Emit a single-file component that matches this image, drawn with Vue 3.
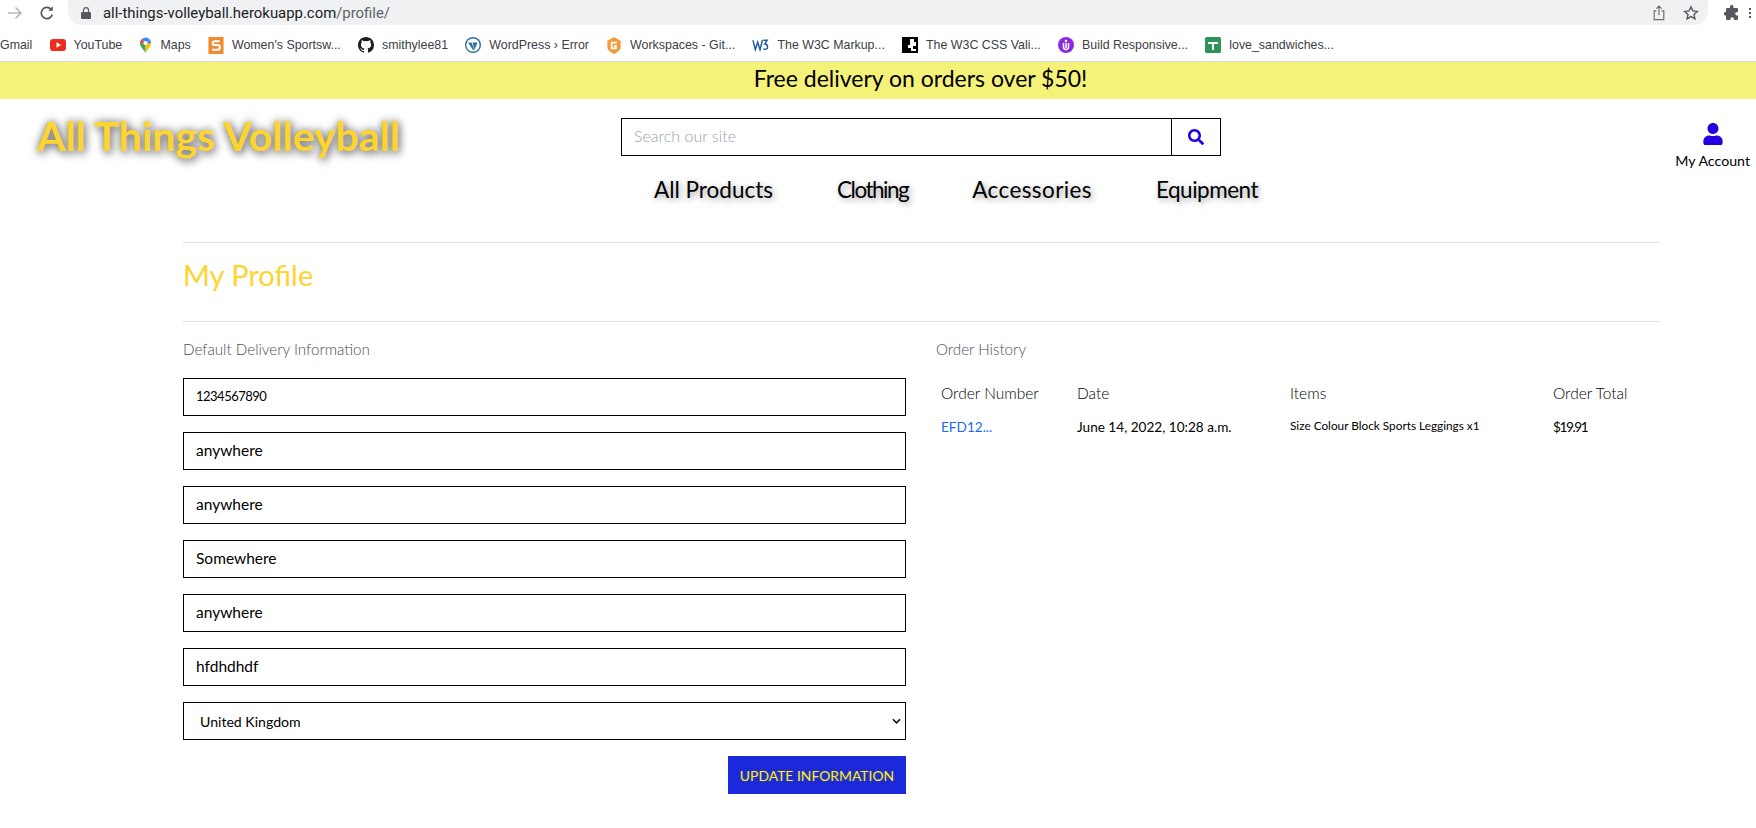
<template>
  <div class="page">
    <div class="toolbar">
      <svg class="nav-arrow" viewBox="0 0 16 16" width="16" height="16" fill="none" stroke="#b4b6b9" stroke-width="1.6">
        <path d="M1 8h13M8.500 2.500 14 8l-5.500 5.500" />
      </svg>
      <svg class="reload" viewBox="0 0 16 16" width="16" height="16" fill="none" stroke="#55585c" stroke-width="1.7">
        <path d="M13.300 9.500A5.600 5.600 0 1 1 12 4.200" />
        <path d="M13.800 1.200v4.600H9.200z" fill="#55585c" stroke="none" />
      </svg>
      <div class="url-pill">
        <svg class="lock" viewBox="0 0 10 12" width="10" height="12" fill="#55585c">
          <path d="M1 5h8a1 1 0 0 1 1 1v5a1 1 0 0 1-1 1H1a1 1 0 0 1-1-1V6a1 1 0 0 1 1-1z" />
          <path d="M2.500 5V3.200a2.500 2.500 0 0 1 5 0V5" fill="none" stroke="#55585c" stroke-width="1.200" />
        </svg>
        <span class="url">all-things-volleyball.herokuapp.com<span class="url-path">/profile/</span></span>
        <span class="pill-spacer"></span>
        <svg viewBox="0 0 16 18" width="14" height="16" fill="none" stroke="#6b6e72" stroke-width="1.300" class="share">
          <path d="M5 6.500H2.500v10h11v-10H11M8 11.500V1.500M5 4l3-3 3 3" />
        </svg>
        <svg viewBox="0 0 16 16" width="16" height="16" fill="none" stroke="#55585c" stroke-width="1.400" class="star">
          <path d="m8 1.800 1.900 4.100 4.400.5-3.300 3 .9 4.400L8 11.600l-3.900 2.200.9-4.400-3.300-3 4.400-.5z" />
        </svg>
      </div>
      <svg viewBox="0 0 16 16" width="16" height="16" fill="#55585c" class="puzzle">
        <path d="M6 1.500a1.800 1.800 0 0 1 3.500 0V3H13a1 1 0 0 1 1 1v3h-1a1.800 1.800 0 0 0 0 3.600h1V14a1 1 0 0 1-1 1h-3v-1a1.800 1.800 0 0 0-3.600 0v1H3a1 1 0 0 1-1-1v-3.500H1a1.800 1.800 0 0 1 0-3.500h1V4a1 1 0 0 1 1-1h3z" />
      </svg>
      <span class="dots"><i></i><i></i><i></i></span>
    </div>

    <div class="bookmarks">
      <span class="bm gmail">Gmail</span>
      <span class="bm">
        <svg viewBox="0 0 16 16" width="16" height="16"><rect y="2" width="16" height="12" rx="3" fill="#ee2c1f" /><path d="m6.500 5.200 4.500 2.800-4.500 2.800z" fill="#fff" /></svg>
        YouTube
      </span>
      <span class="bm">
        <svg viewBox="0 0 14 18" width="13" height="17">
          <path d="M7 17C5.500 13.500 1 10.500 1 6.300L7 7z" fill="#34a853" />
          <path d="M7 17c1.500-3.500 6-6.500 6-10.700L7 7z" fill="#fbbc04" />
          <path d="M1 6.300A6 6 0 0 1 3 2l4 5z" fill="#ea4335" />
          <path d="M3 2a6 6 0 0 1 8.500.3L7 7z" fill="#4285f4" />
          <path d="M11.500 2.300A6 6 0 0 1 13 6.300L7 7z" fill="#4285f4" />
          <circle cx="7" cy="6.300" r="2.200" fill="#fff" />
        </svg>
        Maps
      </span>
      <span class="bm">
        <svg viewBox="0 0 16 18" width="16" height="17"><rect width="16" height="18" fill="#ee8b2e" /><path d="M12 4.500H6.500a1.500 1.500 0 0 0 0 4h3a2 2 0 0 1 0 5H4" fill="none" stroke="#fff" stroke-width="2.200" /></svg>
        Women's Sportsw...
      </span>
      <span class="bm">
        <svg viewBox="0 0 16 16" width="16" height="16" fill="#1b1f23">
          <path d="M8 0C3.580 0 0 3.580 0 8c0 3.540 2.290 6.530 5.470 7.590.4.070.55-.17.55-.38v-1.340c-2.230.48-2.700-1.070-2.700-1.070-.36-.92-.89-1.170-.89-1.170-.73-.5.050-.49.050-.49.800.060 1.230.830 1.230.830.710 1.220 1.870.870 2.330.660.070-.520.280-.870.510-1.070-1.780-.200-3.640-.890-3.640-3.950 0-.870.310-1.590.820-2.150-.080-.200-.360-1.020.080-2.120 0 0 .670-.210 2.200.820a7.600 7.600 0 0 1 4 0c1.530-1.040 2.200-.820 2.200-.820.440 1.100.160 1.920.080 2.120.510.560.820 1.270.820 2.150 0 3.070-1.870 3.750-3.650 3.950.290.250.540.730.540 1.480v2.190c0 .210.150.460.550.380A8.010 8.010 0 0 0 16 8c0-4.420-3.580-8-8-8z" />
        </svg>
        smithylee81
      </span>
      <span class="bm">
        <svg viewBox="0 0 16 16" width="16" height="16"><circle cx="8" cy="8" r="8" fill="#2f6f9f" /><circle cx="8" cy="8" r="6.600" fill="#fff" /><path d="M3 5.500h3.500l2.700 7-1.200.6zM7.500 5.500h5l-3 7.400L8.500 9z" fill="#2f6f9f" /></svg>
        WordPress › Error
      </span>
      <span class="bm">
        <svg viewBox="0 0 16 18" width="16" height="17"><path d="M8 0 15 4v7c0 3-4 5-7 7-3-2-7-4-7-7V4z" fill="#f19a3e" /><path d="M11 6H5.500v6H10V9.500H8" fill="none" stroke="#fff" stroke-width="1.800" /></svg>
        Workspaces - Git...
      </span>
      <span class="bm">
        <svg viewBox="0 0 18 14" width="17" height="14" fill="none" stroke="#1d5a9e" stroke-width="1.500"><path d="M1 2l2.500 10L6 4l2.500 8L11 2" /><path d="M12 2h4l-2.500 4c2 0 3 1 3 3s-2.500 3.500-4.500 2" /></svg>
        The W3C Markup...
      </span>
      <span class="bm">
        <svg viewBox="0 0 16 16" width="16" height="16"><rect width="16" height="16" fill="#000" /><path d="M8 2h4v3h2v4h-3v3h3v2H9v-3H6V8h2z" fill="#fff" /></svg>
        The W3C CSS Vali...
      </span>
      <span class="bm">
        <svg viewBox="0 0 16 16" width="16" height="16"><circle cx="8" cy="8" r="8" fill="#8a2be2" /><path d="M5.500 6v4a2.500 2.500 0 0 0 5 0V6" fill="none" stroke="#fff" stroke-width="1.500" /><circle cx="8" cy="4" r="1.300" fill="#fff" /><path d="M8 6v5" stroke="#fff" stroke-width="1.500" /></svg>
        Build Responsive...
      </span>
      <span class="bm">
        <svg viewBox="0 0 16 16" width="16" height="16"><rect width="16" height="16" rx="1.500" fill="#2f9457" /><path d="M3 5h10v2H9v6H7V7H3z" fill="#fff" /></svg>
        love_sandwiches...
      </span>
    </div>

    <div class="promo">Free delivery on orders over $50!</div>

    <header class="site-header">
      <div class="logo">All Things Volleyball</div>
      <div class="header-middle">
        <form class="search" @submit.prevent>
          <input type="text" placeholder="Search our site" />
          <button type="button" aria-label="Search">
            <svg viewBox="0 0 512 512" width="16" height="16" fill="#2500e0">
              <path d="M505 442.700 405.300 343c-4.500-4.500-10.600-7-17-7H372c27.600-35.300 44-79.700 44-128C416 93.100 322.900 0 208 0S0 93.100 0 208s93.100 208 208 208c48.300 0 92.700-16.400 128-44v16.300c0 6.400 2.500 12.500 7 17l99.700 99.700c9.400 9.400 24.600 9.400 33.900 0l28.300-28.300c9.400-9.400 9.400-24.600.1-34zM208 336c-70.700 0-128-57.200-128-128 0-70.700 57.200-128 128-128 70.700 0 128 57.200 128 128 0 70.700-57.200 128-128 128z" />
            </svg>
          </button>
        </form>
        <nav class="main-nav">
          <a>All Products</a>
          <a>Clothing</a>
          <a>Accessories</a>
          <a>Equipment</a>
        </nav>
      </div>
      <div class="account">
        <svg viewBox="0 0 448 512" width="20" height="22" fill="#2500e0">
          <path d="M224 256c70.700 0 128-57.300 128-128S294.700 0 224 0 96 57.300 96 128s57.300 128 128 128zm89.600 32h-16.700c-22.200 10.200-46.900 16-72.900 16s-50.600-5.800-72.900-16h-16.700C60.200 288 0 348.200 0 422.400V464c0 26.500 21.500 48 48 48h352c26.500 0 48-21.500 48-48v-41.600c0-74.200-60.200-134.400-134.400-134.400z" />
        </svg>
        <span>My Account</span>
      </div>
    </header>

    <main class="content">
      <hr />
      <h2 class="page-title">My Profile</h2>
      <hr />
      <div class="columns">
        <section class="delivery">
          <p class="section-label">Default Delivery Information</p>
          <form class="profile-form" @submit.prevent>
            <input v-for="(value, i) in fields" :key="i" type="text" :value="value" />
            <div class="select-wrap">
              <span>United Kingdom</span>
              <svg viewBox="0 0 10 7" width="9" height="7" fill="none" stroke="#111" stroke-width="1.800"><path d="m1 1 4 4 4-4" /></svg>
            </div>
            <button type="button" class="update-btn">UPDATE INFORMATION</button>
          </form>
        </section>
        <section class="history">
          <p class="section-label">Order History</p>
          <table>
            <thead>
              <tr>
                <th class="c-num">Order Number</th>
                <th class="c-date">Date</th>
                <th class="c-items">Items</th>
                <th>Order Total</th>
              </tr>
            </thead>
            <tbody>
              <tr>
                <td><a class="order-link">EFD12...</a></td>
                <td>June 14, 2022, 10:28 a.m.</td>
                <td class="item-text">Size Colour Block Sports Leggings x1</td>
                <td class="price">$19.91</td>
              </tr>
            </tbody>
          </table>
        </section>
      </div>
    </main>
  </div>
</template>

<script setup>
const fields = ['1234567890', 'anywhere', 'anywhere', 'Somewhere', 'anywhere', 'hfdhdhdf']
</script>

<style scoped>
.page {
  height: 828px;
  overflow: hidden;
  background: #fff;
  color: #000;
  font-family: Lato, "Open Sans", sans-serif;
}

/* browser chrome */
.toolbar {
  height: 25px;
  display: flex;
  align-items: center;
  padding-left: 7px;
  font-family: Roboto, "Liberation Sans", sans-serif;
}

.reload {
  margin-left: 16px;
}

.url-pill {
  width: 1640px;
  height: 25px;
  margin-left: 13px;
  box-sizing: border-box;
  display: flex;
  align-items: center;
  padding: 0 9px 0 13px;
  background: #eff1f3;
  border-radius: 0 0 14px 14px;
}

.lock {
  margin-right: 12px;
}

.url {
  font-size: 14.900px;
  color: #202124;
}

.url-path {
  color: #5f6368;
}

.pill-spacer {
  flex: 1;
}

.star {
  margin-left: 17px;
}

.puzzle {
  margin-left: 16px;
}

.dots {
  margin-left: 9px;
  display: flex;
  flex-direction: column;
  gap: 2px;
}

.dots i {
  width: 2px;
  height: 2px;
  background: #55585c;
}

.bookmarks {
  height: 37px;
  box-sizing: border-box;
  display: flex;
  align-items: center;
  gap: 17.200px;
  padding-top: 4px;
  border-bottom: 1px solid #d8dadd;
  font-family: "Liberation Sans", Arial, sans-serif;
  font-size: 12.400px;
  color: #3c4043;
  white-space: nowrap;
}

.bm {
  display: flex;
  align-items: center;
  gap: 8px;
}

/* site header */
.promo {
  height: 37px;
  box-sizing: border-box;
  padding-left: 85px;
  background: #f5f27a;
  text-align: center;
  font-size: 23px;
  line-height: 33px;
}

.site-header {
  height: 143px;
  display: flex;
  position: relative;
}

.logo {
  width: 621px;
  box-sizing: border-box;
  padding: 9px 0 0 37px;
  font-size: 41px;
  line-height: 56px;
  font-weight: 700;
  color: #fdd430;
  text-shadow: 0 0 9px #777, 2px 3px 9px #888;
  white-space: nowrap;
}

.header-middle {
  width: 600px;
  padding-top: 19px;
}

.search {
  height: 38px;
  display: flex;
  box-sizing: border-box;
  border: 1px solid #000;
}

.search input {
  flex: 1;
  min-width: 0;
  border: 0;
  outline: 0;
  padding: 0 12px 4px;
  font: 300 16px Lato, sans-serif;
}

.search input::placeholder {
  color: #9aa2b1;
  opacity: 1;
}

.search button {
  width: 49px;
  border: 0;
  border-left: 1px solid #000;
  background: #fff;
  display: flex;
  align-items: center;
  justify-content: center;
  padding: 0;
}

.main-nav {
  display: flex;
  gap: 64px;
  padding: 17px 0 0 33px;
  font-size: 22.500px;
  line-height: 34px;
  white-space: nowrap;
}

.main-nav a {
  text-shadow: 2px 2px 6px #999;
}

.main-nav a:nth-child(2) {
  letter-spacing: -1.500px;
}

.main-nav a:nth-child(3) {
  letter-spacing: .4px;
}

.main-nav a:nth-child(4) {
  letter-spacing: -.5px;
}

.account {
  position: absolute;
  top: 24px;
  right: 6px;
  display: flex;
  flex-direction: column;
  align-items: center;
  gap: 6px;
  font-size: 14.200px;
  line-height: 20px;
  white-space: nowrap;
}

/* profile content */
.content {
  width: 1477px;
  margin-left: 183px;
}

hr {
  margin: 0;
  border: 0;
  border-top: 1px solid #dfe1e3;
}

.page-title {
  height: 78px;
  margin: 0;
  font-size: 29px;
  font-weight: 400;
  line-height: 64px;
  color: #fdd430;
}

.columns {
  display: grid;
  grid-template-columns: 723px 1fr;
  gap: 30px;
}

.section-label {
  margin: 0;
  height: 56px;
  padding-top: 16px;
  box-sizing: border-box;
  font-size: 15.200px;
  font-weight: 300;
  line-height: 22px;
  color: #4a4f5a;
}

.profile-form {
  display: flex;
  flex-direction: column;
  gap: 16px;
}

.profile-form input,
.select-wrap {
  height: 38px;
  box-sizing: border-box;
  border: 1px solid #000;
  font: 400 15.500px Lato, sans-serif;
  color: #000;
  outline: 0;
}

.profile-form input {
  padding: 0 12px 3px;
}

.profile-form input:first-child {
  font-size: 13px;
  letter-spacing: -.5px;
}

.select-wrap {
  display: flex;
  align-items: center;
  justify-content: space-between;
  padding: 0 4px 0 16px;
  font-size: 14.100px;
}

.update-btn {
  align-self: flex-end;
  width: 178px;
  height: 38px;
  padding: 0;
  border: 0;
  background: #1c28dc;
  color: #f5ee3a;
  font: 400 13.900px Lato, sans-serif;
  white-space: nowrap;
  text-shadow: 0 0 3px #4a4a60;
}

table {
  border-collapse: collapse;
  margin-left: 5px;
  width: 700px;
}

th {
  height: 30px;
  padding: 0;
  text-align: left;
  font-size: 15.500px;
  font-weight: 300;
  white-space: nowrap;
}

td {
  height: 34px;
  padding: 0;
  font-size: 13.600px;
  white-space: nowrap;
}

.c-num {
  width: 136px;
}

.c-date {
  width: 213px;
}

.c-items {
  width: 263px;
}

.order-link {
  color: #1a6bf0;
}

.item-text {
  font-size: 11.800px;
  padding-bottom: 4px;
}

.price {
  letter-spacing: -1.400px;
}
</style>

<style>
html,
body {
  margin: 0;
  overflow: hidden;
}
</style>
